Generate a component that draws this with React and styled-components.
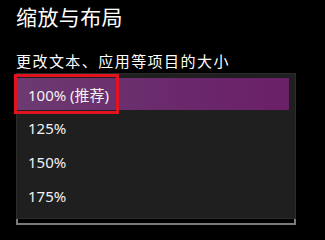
import styled, { createGlobalStyle } from 'styled-components';

const GlobalStyle = createGlobalStyle`
  html, body {
    margin: 0;
    padding: 0;
    background: #000;
  }
  body {
    font-family: "Noto Sans", "Noto Sans CJK SC", sans-serif;
    color: #fff;
  }
`;

const Page = styled.div`
  width: 325px;
  height: 237px;
  padding: 3px 29px 0 16px;
  box-sizing: border-box;
  overflow: hidden;
  display: flex;
  flex-direction: column;
`;

const Title = styled.h1`
  margin: 0;
  font-size: 21px;
  font-weight: 400;
  line-height: 28px;
  letter-spacing: 0.4px;
`;

const Label = styled.div`
  margin-top: 20px;
  font-size: 15px;
  line-height: 20px;
  letter-spacing: 1.45px;
`;

const Popup = styled.div`
  margin-top: 2px;
  background: #1f1f1f;
  border: 1px solid #2c2c2c;
  padding: 4px 6px 5px 0;
  display: flex;
  flex-direction: column;
`;

const Option = styled.div`
  position: relative;
  height: ${p => (p.$selected ? 32 : 34)}px;
  margin-bottom: ${p => (p.$selected ? 1 : 0)}px;
  display: flex;
  align-items: center;
  padding-left: 11px;
  font-size: 15px;
  color: #f2f2f2;
  background: ${p =>
    p.$selected ? 'linear-gradient(90deg, #6d3a71 0%, #6a2a6c 55%, #6b1f67 100%)' : 'transparent'};
`;

const Highlight = styled.div`
  position: absolute;
  left: -3px;
  top: -4px;
  width: 105px;
  height: 40px;
  border: 3px solid #e3121f;
  box-sizing: border-box;
`;

const ComboTail = styled.div`
  height: 4px;
  border: 2px solid #7a7a7a;
  border-top: none;
`;

const options = ['100% (推荐)', '125%', '150%', '175%'];

export default function App() {
  return (
    <>
      <GlobalStyle />
      <Page>
        <Title>缩放与布局</Title>
        <Label>更改文本、应用等项目的大小</Label>
        <Popup>
          {options.map((o, i) => (
            <Option key={o} $selected={i === 0}>
              {o}
              {i === 0 && <Highlight />}
            </Option>
          ))}
        </Popup>
        <ComboTail />
      </Page>
    </>
  );
}
